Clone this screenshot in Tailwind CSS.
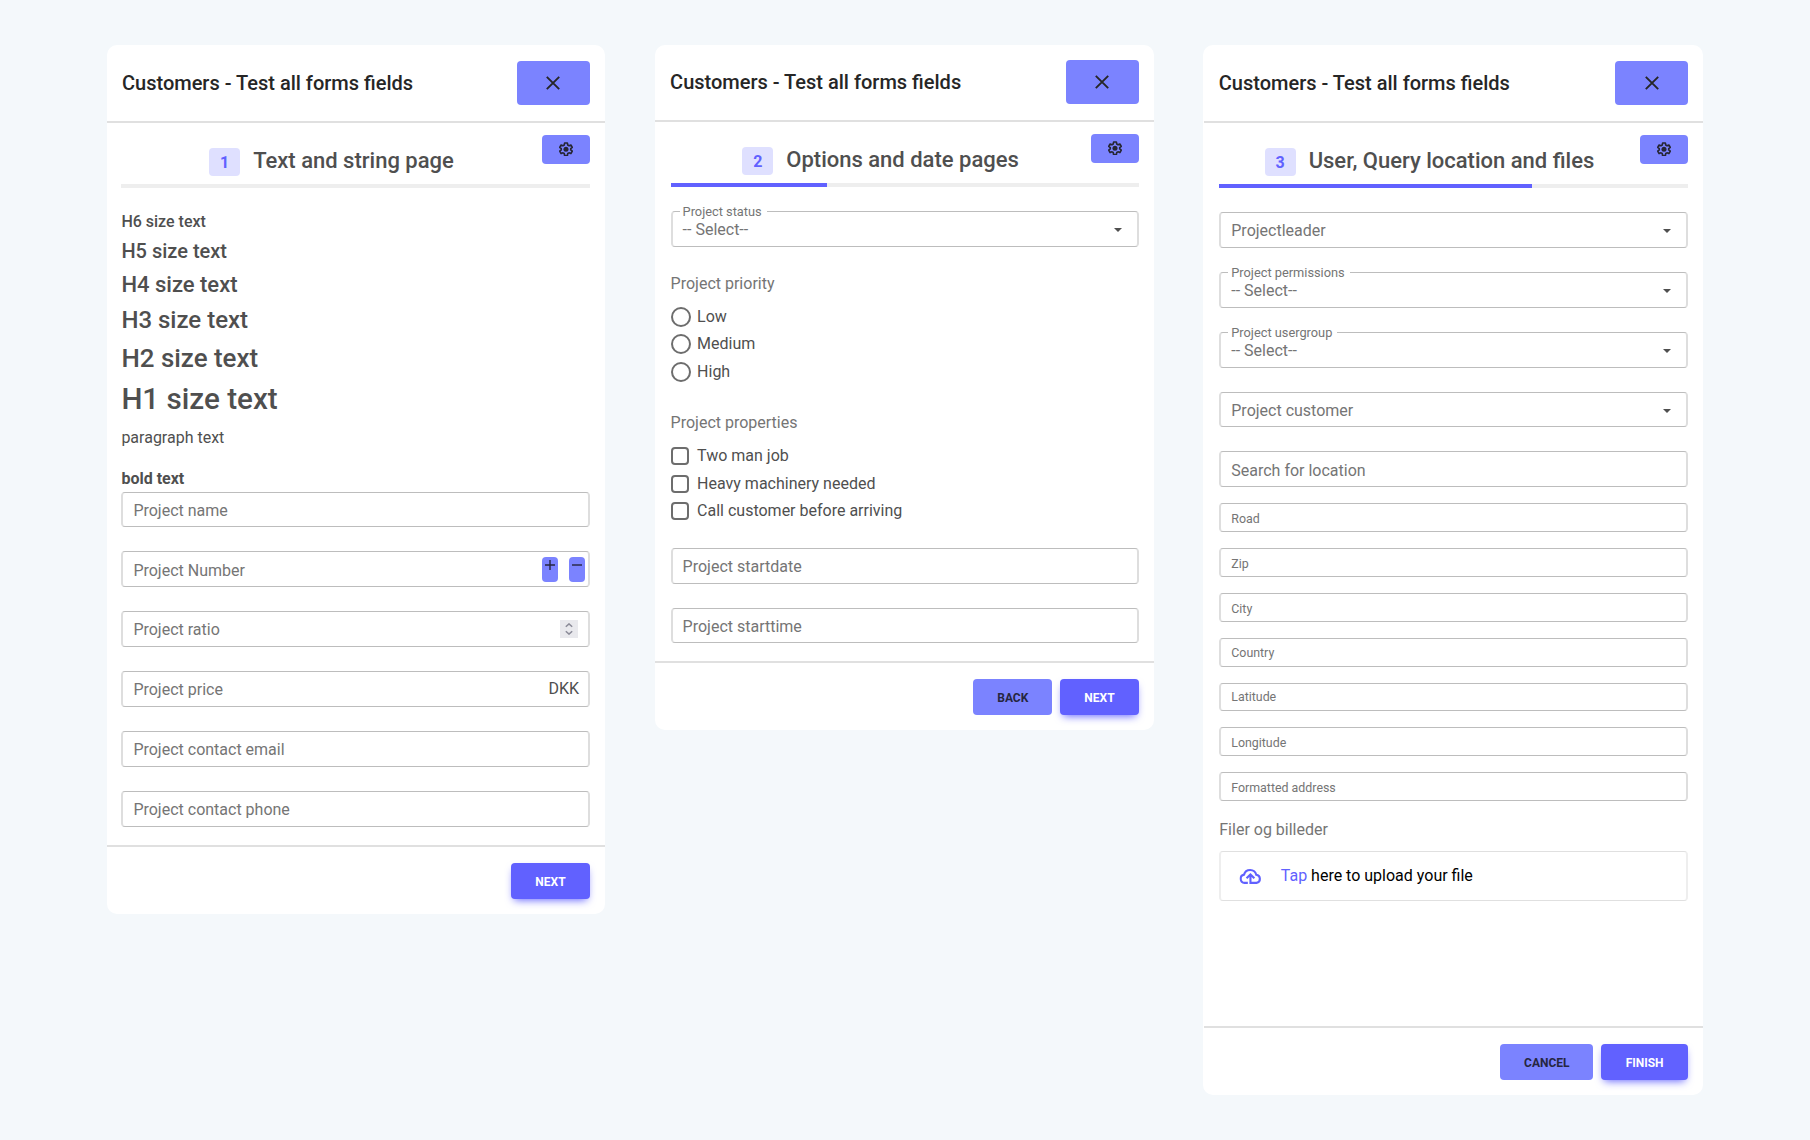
<!DOCTYPE html>
<html lang="en">
<head>
<meta charset="utf-8">
<title>Customers - Test all forms fields</title>
<script src="https://cdn.jsdelivr.net/npm/@tailwindcss/browser@4"></script>
</head>
<body class="bg-[#f4f8fb] font-['Roboto',sans-serif] text-[#4f4f4f] text-base">
<svg class="hidden">
  <symbol id="close" viewBox="0 0 14 14"><path d="M.8.8l12.4 12.4M13.2.8L.8 13.2" fill="none" stroke="#262626" stroke-width="1.9"/></symbol>
  <symbol id="gear" viewBox="0 0 24 24"><path fill="none" stroke="#262633" stroke-width="2.8" stroke-linejoin="round" d="M9.600 1.800h4.800l.6 3.400 2.100 1.200 3.300-1.200 2.400 4.100-2.700 2.200v2l2.700 2.200-2.400 4.100-3.300-1.200-2.100 1.200-.6 3.400H9.600L9 19.800l-2.100-1.200-3.300 1.200-2.400-4.100 2.700-2.200v-2L1.200 9.300l2.400-4.100 3.300 1.200L9 5.200z"/><circle cx="12" cy="12.500" r="4.300" fill="#262633"/></symbol>
  <symbol id="cloud" viewBox="0 0 22 16"><path fill="none" stroke="#6161ff" stroke-width="2.100" stroke-linecap="butt" d="M8.600 14.900H5.300a4.200 4.200 0 0 1-.5-8.300A6.300 6.300 0 0 1 17 6.800a4.100 4.100 0 0 1 .3 8.100H11.200V6.800M7.300 10.300l3.900-3.900 3.900 3.900"/></symbol>
</svg>
<main id="app" class="flex items-start pt-[45px] pl-[106.700px]"></main>
<script>
const header = (pt) => `
  <header class="mx-[0.500px] flex items-start justify-between pl-[14.800px] pr-[15.200px] ${pt} border-b-2 border-[#e0e0e0]">
    <h5 class="mt-[9px] text-[20px] leading-[26px] font-medium text-[#262626]">Customers - Test all forms fields</h5>
    <button class="flex h-[44px] w-[72.300px] items-center justify-center rounded bg-[#7b83ff]"><svg class="size-[14px]"><use href="#close"/></svg></button>
  </header>`;
const step = (n, title, pct) => `
  <div class="flex h-[61px] items-start pt-3">
    <div class="flex flex-1 justify-center pt-[10px]">
      <span class="mt-[3px] mr-[13px] flex h-[28px] w-[31px] items-center justify-center rounded bg-[#dfe0ff] pt-px text-base font-bold text-[#6161ff]">${n}</span>
      <h4 class="mt-[2px] text-[22px] leading-[28px] font-medium">${title}</h4>
    </div>
    <button class="flex h-[29px] w-[48px] justify-center rounded bg-[#7b83ff] pt-[7px]"><svg class="size-[14px]"><use href="#gear"/></svg></button>
  </div>
  <div class="h-1 bg-[#eee]"><div class="h-1 bg-[#6161ff]" style="width:${pct}%"></div></div>`;
const field = (label, h = 'h-[36px]', extra = '', pad = 'pt-[2px]') => `
  <div class="relative flex ${h} items-center justify-between rounded border-x-2 border-y border-x-[#dedede] border-y-[#bdbdbd] px-[10px] text-[#757575]"><span class="${pad}">${label}</span>${extra}</div>`;
const small = (label, h = 'h-[29px]', pad = 'pt-[3px]') => `
  <div class="flex ${h} ${pad} items-center rounded border-x-2 border-y border-x-[#dedede] border-y-[#bdbdbd] px-[10px] text-[12.400px] text-[#757575]">${label}</div>`;
const arrow = '<svg class="mt-[2px] mr-[4.500px] h-1 w-2" viewBox="0 0 8 4"><path d="M0 0h8L4 4z" fill="#4f4f4f"/></svg>';
const select = (label) => field('-- Select--<span class="absolute -top-[8px] left-[7px] bg-white pl-[3px] pr-[5px] text-[12.800px] leading-[16px]">' + label + '</span>', 'h-[36px]', arrow);
const btn = (t, w, primary) => `<button class="${w} h-[36px] rounded pt-px text-xs font-bold ${primary ? 'bg-[#6161ff] text-white shadow-[0_4px_9px_-3px_#6161ff]' : 'bg-[#7b83ff] text-[#262640]'}">${t}</button>`;
const footer = (b) => `<footer class="mx-[0.500px] flex justify-end gap-2 border-t-2 border-[#e0e0e0] px-[15.200px] pt-4">${b}</footer>`;
const radio = (t) => `<label class="flex h-[20px] items-center gap-[6.500px]"><i class="size-[20px] rounded-full border-2 border-[#6d6d6d]"></i>${t}</label>`;
const check = (t) => `<label class="flex h-[18px] items-center gap-[8.500px]"><i class="size-[18px] rounded border-2 border-[#6d6d6d]"></i>${t}</label>`;
const stepper = (d) => `<button class="flex h-[25px] w-[16px] justify-center rounded bg-[#7b83ff] pt-[3px]"><svg class="size-[10px]" viewBox="0 0 10 10"><path d="${d}" stroke="#262640" stroke-width="1.400"/></svg></button>`;
const spinner = '<span class="flex h-[18px] w-[18px] items-center justify-center bg-[#e9e9ed]"><svg class="h-[12px] w-[8px]" viewBox="0 0 8 12"><path d="M.8 3.800L4 .9l3.200 2.900M.8 8.200L4 11.100l3.200-2.900" fill="none" stroke="#8b8b98" stroke-width="1.500"/></svg></span>';

document.getElementById('app').innerHTML = `
<section class="h-[869px] w-[498.600px] rounded-[10px] bg-white">
  ${header('h-[78px] pt-[16px]')}
  <div class="pr-[15.700px] pl-[14.700px]">
    ${step(1, 'Text and string page', 0)}
    <div class="h-[304px] pt-[24px] font-medium">
      <h6 class="text-base leading-[19px]">H6 size text</h6>
      <h5 class="mt-[8px] text-[20px] leading-[24px]">H5 size text</h5>
      <h4 class="mt-[9px] text-[22px] leading-[26px]">H4 size text</h4>
      <h3 class="mt-[8px] text-[24px] leading-[29px]">H3 size text</h3>
      <h2 class="mt-[8px] text-[25.900px] leading-[31px]">H2 size text</h2>
      <h1 class="mt-[7px] text-[29.600px] leading-[36px]">H1 size text</h1>
      <p class="mt-[8px] leading-[26px] font-normal">paragraph text</p>
      <p class="mt-[15px] leading-[26px] font-bold">bold text</p>
    </div>
    <div class="grid pb-[18px] gap-6">
      ${field('Project name', 'h-[35px]')}
      ${field('Project Number', 'h-[36px]', `<span class="-mr-[7px] flex gap-[11px]">${stepper('M0 5h10M5 0v10')}${stepper('M0 5h10')}</span>`, 'pt-[4px]')}
      ${field('Project ratio', 'h-[36px]', spinner)}
      ${field('Project price', 'h-[36px]', '<span class="-mr-[1.500px] text-[#4f4f4f]">DKK</span>')}
      ${field('Project contact email')}
      ${field('Project contact phone')}
    </div>
  </div>
  ${footer(btn('NEXT', 'w-[78.300px]', 1))}
</section>
<section class="ml-[49.500px] h-[685px] w-[499.500px] rounded-[10px] bg-white">
  ${header('h-[77px] pt-[15px]')}
  <div class="pr-[15.700px] pl-[15.800px]">
    ${step(2, 'Options and date pages', 33.33)}
    <div class="pt-6">${select('Project status')}</div>
    <p class="mt-[26px] leading-[22px] text-[#757575]">Project priority</p>
    <div class="mt-[12px] grid">${radio('Low')}<div class="mt-[7px] grid gap-2">${radio('Medium')}${radio('High')}</div></div>
    <p class="mt-[30px] leading-[22px] text-[#757575]">Project properties</p>
    <div class="mt-[13px] grid">${check('Two man job')}<div class="mt-[10px] grid gap-[9px]">${check('Heavy machinery needed')}${check('Call customer before arriving')}</div></div>
    <div class="grid gap-6 pt-[28px] pb-[18px]">${field('Project startdate')}${field('Project starttime', 'h-[35px]')}</div>
  </div>
  ${footer(btn('BACK', 'w-[79px]') + btn('NEXT', 'w-[78.300px]', 1))}
</section>
<section class="ml-[49.200px] h-[1050px] w-[500px] rounded-[10px] bg-white">
  ${header('h-[78px] pt-[16px]')}
  <div class="h-[903px] px-[15.800px]">
    ${step(3, 'User, Query location and files', 66.66)}
    <div class="grid gap-6 pt-6">
      ${field('Projectleader', 'h-[36px]', arrow)}
      ${select('Project permissions')}
      ${select('Project usergroup')}
      ${field('Project customer', 'h-[35px]', arrow)}
      ${field('Search for location', 'h-[36px]', '', 'pt-[4px]')}
    </div>
    <div class="grid gap-4 pt-4">
      ${small('Road')}
      ${small('Zip')}
      ${small('City')}
      ${small('Country', 'h-[29px]', 'pt-px')}
      ${small('Latitude', 'h-[28px]', 'pt-px')}
      ${small('Longitude')}
      ${small('Formatted address')}
    </div>
    <p class="mt-[17px] leading-[24px] text-[#757575]">Filer og billeder</p>
    <div class="mt-[9px] flex h-[50px] items-center rounded border-x-2 border-y border-x-[#eee] border-y-[#e0e0e0] pl-[18px] text-black">
      <svg class="mr-[19px] h-[16px] w-[22.500px]" viewBox="0 0 22 16"><use href="#cloud"/></svg>
      <span class="pb-px"><span class="text-[#6161ff]">Tap</span> here to upload your file</span>
    </div>
  </div>
  ${footer(btn('CANCEL', 'w-[93.300px]') + btn('FINISH', 'w-[86.300px]', 1))}
</section>`;
</script>
</body>
</html>
